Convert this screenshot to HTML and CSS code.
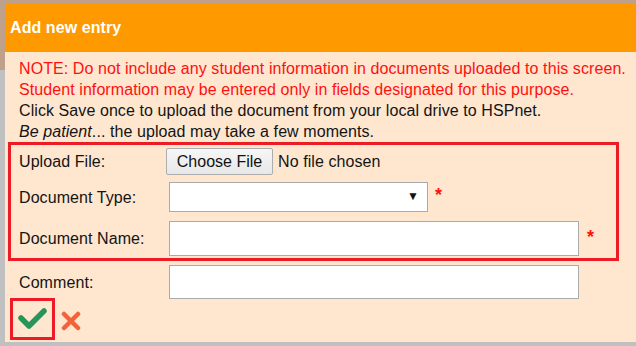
FILE: index.html
```html
<!DOCTYPE html>
<html>
<head>
    <title>Add new entry</title>
    <meta name="viewport" content="width=device-width, initial-scale=1">
    <link rel="stylesheet" href="styles.css">
</head>
<body>
    <div class="dialog">
        <div class="dialog-header">Add new entry</div>
        <div class="dialog-body">
            <div class="notes">
                <p class="warn">NOTE: Do not include any student information in documents uploaded to this screen.</p>
                <p class="warn">Student information may be entered only in fields designated for this purpose.</p>
                <p>Click Save once to upload the document from your local drive to HSPnet.</p>
                <p><em>Be patient</em>... the upload may take a few moments.</p>
            </div>

            <div class="required-box">
                <div class="row row-upload">
                    <label class="label">Upload File:</label>
                    <button class="file-btn">Choose File</button>
                    <span class="file-name">No file chosen</span>
                </div>
                <div class="row row-type">
                    <label class="label">Document Type:</label>
                    <div class="select-wrap">
                        <select class="select"><option></option></select>
                    </div>
                    <span class="star">*</span>
                </div>
                <div class="row row-name">
                    <label class="label">Document Name:</label>
                    <input class="text-input" type="text">
                    <span class="star">*</span>
                </div>
            </div>

            <div class="row row-comment">
                <label class="label">Comment:</label>
                <input class="text-input" type="text">
            </div>

            <div class="actions">
                <div class="save-box">
                    <svg width="30" height="24" viewBox="0 0 30 24">
                        <polyline points="3,10 11,18 26,3" fill="none" stroke="#27955a" stroke-width="5.5" stroke-linecap="round" stroke-linejoin="round"/>
                    </svg>
                </div>
                <svg class="cancel" width="20" height="20" viewBox="0 0 20 20">
                    <path d="M3 3 L17 17 M17 3 L3 17" stroke="#f4623a" stroke-width="4.5" stroke-linecap="round"/>
                </svg>
            </div>
        </div>
    </div>
</body>
</html>
```

FILE: styles.css
```css
body {
    margin: 0;
    font-family: "Liberation Sans", Arial, sans-serif;
    font-size: 16px;
    letter-spacing: 0.08px;
    color: #141414;
    background: linear-gradient(to bottom, #bfa08a 0, #bfa08a 70px, #c0c0c0 70px);
    height: 346px;
    overflow: hidden;
}
.dialog {
    margin: 4px 0 0 5px;
}
.dialog-header {
    background: #ff9900;
    color: #fff;
    font-weight: bold;
    font-size: 16px;
    height: 48px;
    line-height: 48px;
    padding-left: 5px;
}
.dialog-body {
    background: #fee6cf;
    padding: 6px 0 2px 0;
}
.notes {
    padding-left: 14px;
    line-height: 21px;
}
.notes p {
    margin: 0;
    white-space: nowrap;
}
.warn {
    color: #ff1010;
}
.required-box {
    margin-left: 3px;
    width: 611px;
    box-sizing: border-box;
    border: 3px solid #ed1c24;
    padding: 3px 0 2px 8px;
}
.row {
    display: flex;
    align-items: center;
}
.label {
    width: 150px;
    flex: none;
}
.row-upload {
    height: 27px;
}
.file-btn {
    margin-left: -3px;
    height: 27px;
    width: 107px;
    font-family: "Liberation Sans", Arial, sans-serif;
    font-size: 16px;
    color: #111;
    background: linear-gradient(#f6f6f6, #e8e8e8);
    border: 1px solid #adadad;
    border-radius: 2px;
    padding: 0;
}
.file-name {
    margin-left: 5px;
}
.row-type {
    margin-top: 7px;
    height: 30px;
}
.row-type .label {
    padding-top: 1px;
}
.select-wrap {
    position: relative;
    width: 259px;
    height: 30px;
}
.select-wrap::after {
    content: "\25BC";
    position: absolute;
    right: 9px;
    top: 7px;
    font-size: 12px;
    color: #111;
    pointer-events: none;
}
.select {
    appearance: none;
    -webkit-appearance: none;
    width: 100%;
    height: 30px;
    background: #fff;
    border: 1px solid #aaa;
    border-radius: 0;
}
.star {
    color: #ff1010;
    font-weight: bold;
    font-size: 18px;
    align-self: flex-start;
    margin-left: 7px;
    line-height: 16px;
    padding-top: 5px;
}
.row-name {
    margin-top: 9px;
    height: 35px;
}
.row-name .label {
    padding-top: 1px;
}
.row-name .star {
    margin-left: 8px;
    padding-top: 8px;
}
.text-input {
    width: 410px;
    height: 35px;
    box-sizing: border-box;
    border: 1px solid #aaa;
    background: #fff;
    margin: 0;
    padding: 0;
}
.row-comment {
    margin-top: 4px;
    padding-left: 14px;
    height: 34px;
}
.row-comment .label {
    padding-top: 1px;
}
.row-comment .text-input {
    height: 34px;
}
.actions {
    display: flex;
    align-items: center;
    margin: -1px 0 0 5px;
}
.save-box {
    width: 45px;
    height: 42px;
    box-sizing: border-box;
    border: 3px solid #ed1c24;
    display: flex;
    align-items: center;
    justify-content: center;
    padding-top: 2px;
}
.cancel {
    margin-left: 6px;
    margin-top: 3px;
}
```
